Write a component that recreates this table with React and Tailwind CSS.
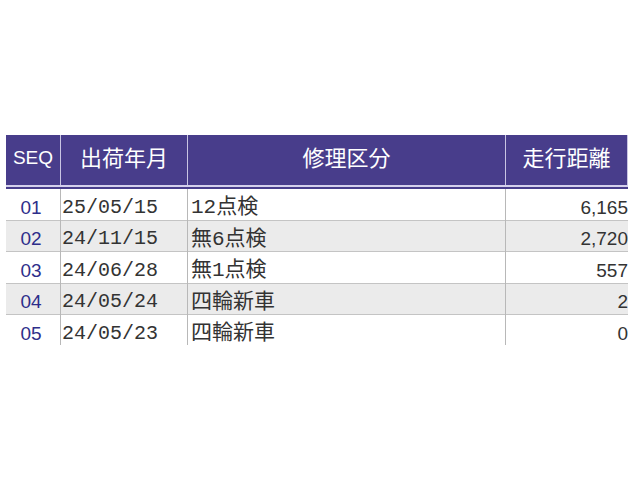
const rows = [
    { seq: '01', date: '25/05/15', kind: '12点検', dist: '6,165' },
    { seq: '02', date: '24/11/15', kind: '無6点検', dist: '2,720' },
    { seq: '03', date: '24/06/28', kind: '無1点検', dist: '557' },
    { seq: '04', date: '24/05/24', kind: '四輪新車', dist: '2' },
    { seq: '05', date: '24/05/23', kind: '四輪新車', dist: '0' },
];

const headCell = "flex items-center justify-center border-r border-[#c9c5e3] pb-[4px] font-['Liberation_Sans','Noto_Sans_CJK_JP',sans-serif]";
const monoJp = "font-['Liberation_Mono','Noto_Sans_CJK_JP',monospace]";
const sansJp = "font-['Liberation_Sans','Noto_Sans_CJK_JP',sans-serif]";

const App = () => {
    return (
        <div className="w-[640px] h-[480px] bg-white pt-[135px] pl-[6px]">
            <div className="w-[622px] h-[210px] overflow-hidden">
                <div className="grid grid-cols-[55px_127px_318px_122px] h-[52px] bg-[#483d8b] text-white border-b-2 border-[#d4d0ec]">
                    <div className={`${headCell} text-[19px]`}>SEQ</div>
                    <div className={`${headCell} text-[22px]`}>出荷年月</div>
                    <div className={`${headCell} text-[22px]`}>修理区分</div>
                    <div className={`${headCell} text-[22px]`}>走行距離</div>
                </div>
                <div className="h-[2px] bg-[#483d8b]" />
                {rows.map((r, i) => (
                    <div
                        key={r.seq}
                        className={`grid grid-cols-[55px_127px_318px_122px] h-[31.5px] border-b border-[#c4c4c4] text-[#222] ${i % 2 === 1 ? 'bg-[#ebebeb]' : 'bg-white'}`}
                    >
                        <div className={`flex items-center justify-center pt-[3px] pr-[4px] text-[19px] text-[#2e2e8a] border-r border-[#b8b8b8] ${sansJp}`}>
                            {r.seq}
                        </div>
                        <div className={`flex items-center pt-[3px] pl-[1px] text-[20px] text-[#333] border-r border-[#b8b8b8] ${monoJp}`}>
                            {r.date}
                        </div>
                        <div className={`flex items-center pt-[3px] pl-[3px] text-[21px] text-[#333] border-r border-[#b8b8b8] ${monoJp}`}>
                            {r.kind}
                        </div>
                        <div className={`flex items-center justify-end pt-[3px] text-[19px] text-[#333] ${sansJp}`}>
                            {r.dist}
                        </div>
                    </div>
                ))}
            </div>
        </div>
    );
};

export default App;
